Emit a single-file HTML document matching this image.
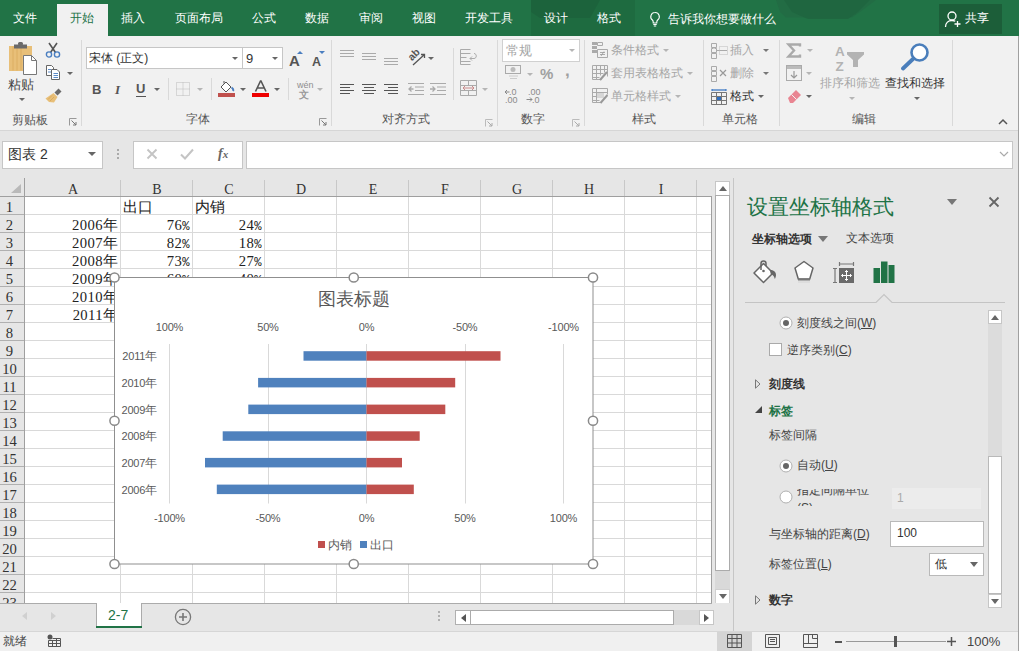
<!DOCTYPE html>
<html><head><meta charset="utf-8">
<style>
*{box-sizing:border-box;margin:0;padding:0}
html,body{width:1019px;height:651px;overflow:hidden;background:#e6e6e6;font-family:"Liberation Sans",sans-serif;color:#444;position:relative}
.a{position:absolute}
.t{position:absolute;white-space:nowrap;line-height:1}
#title{left:0;top:0;width:1019px;height:36px;background:#217346}
#title .tab{position:absolute;top:11px;font-size:12px;color:#fff;line-height:14px;white-space:nowrap}
#ribbon{left:0;top:36px;width:1019px;height:95px;background:#f1f1f1;border-bottom:1px solid #d6d6d6}
.sep{position:absolute;width:1px;background:#d9d9d9}
.glabel{position:absolute;top:77px;font-size:12px;color:#555;line-height:12px;white-space:nowrap}
.dis{color:#a6a6a6}
.arr{position:absolute;width:0;height:0;border-left:3px solid transparent;border-right:3px solid transparent;border-top:3px solid #666}
.arr.g{border-top-color:#b5b5b5}
.box{position:absolute;background:#fff;border:1px solid #c6c6c6}
#grid{left:0;top:178px;width:713px;height:425px;background:#fff;overflow:hidden}
.cell{position:absolute;font-family:"Liberation Serif",serif;font-size:14.67px;color:#222;line-height:13px;white-space:nowrap;letter-spacing:.4px}
#pane{left:733px;top:178px;width:286px;height:453px;background:#e6e6e6;border-left:1px solid #c6c6c6}
.pt{position:absolute;font-size:12px!important;color:#444;line-height:12px;white-space:nowrap}
.hd{position:absolute;top:6px;font-family:"Liberation Serif",serif;font-size:14px;color:#333;line-height:12px;text-align:center}
.rh{position:absolute;left:0;width:19px;text-align:center;font-family:"Liberation Serif",serif;font-size:14.67px;color:#333;line-height:12px}
.cell i{font-style:normal;font-size:14.67px;letter-spacing:0}
.cell b{font-weight:normal;font-family:"Liberation Mono",monospace;font-size:12.2px}
.cl{font-family:"Liberation Sans",sans-serif;font-size:11px;fill:#595959;letter-spacing:-.2px}
.cl tspan{font-size:12px}
.cl2{font-family:"Liberation Sans",sans-serif;font-size:12px;fill:#595959}
</style></head><body>

<!-- title / tabs -->
<div id="title" class="a">
  <div class="a" style="left:531px;top:0;width:104px;height:36px;background:#1e6b40"></div>
  <svg class="a" style="left:0;top:0" width="1019" height="36"><path d="M776 0H876L860 12 852 17.5H786L780 12z" fill="#226c44"/><path d="M784 0H870L858 12 848 19H808L792 12z" fill="#1f6540" opacity=".85"/><path d="M531 0H600L590 18H540L531 12z" fill="#1b5e3a" opacity=".6"/></svg>
  <div class="a" style="left:57px;top:4px;width:51px;height:32px;background:#f1f1f1"></div>
  <span class="tab" style="left:13px">文件</span>
  <span class="tab" style="left:70px;color:#217346">开始</span>
  <span class="tab" style="left:121px">插入</span>
  <span class="tab" style="left:175px">页面布局</span>
  <span class="tab" style="left:252px">公式</span>
  <span class="tab" style="left:305px">数据</span>
  <span class="tab" style="left:359px">审阅</span>
  <span class="tab" style="left:412px">视图</span>
  <span class="tab" style="left:465px">开发工具</span>
  <span class="tab" style="left:544px">设计</span>
  <span class="tab" style="left:597px">格式</span>
  <svg class="a" style="left:649px;top:11px" width="12" height="16" viewBox="0 0 12 16"><path d="M6 1.5a4.2 4.2 0 0 0-2.6 7.5c.6.5.8 1.2.8 2V12h3.6v-1c0-.8.3-1.5.9-2A4.2 4.2 0 0 0 6 1.5z" fill="none" stroke="#fff" stroke-width="1.1"/><path d="M4.3 13.5h3.4M4.8 15h2.4" stroke="#fff" stroke-width="1.1"/></svg>
  <span class="tab" style="left:668px;font-size:12px;top:12px">告诉我你想要做什么</span>
  <div class="a" style="left:939px;top:4px;width:63px;height:30px;background:#1c5e39"></div>
  <svg class="a" style="left:944px;top:10px" width="18" height="18" viewBox="0 0 18 18"><circle cx="8" cy="6" r="4" fill="none" stroke="#fff" stroke-width="1.3"/><path d="M1.5 17c0-4 2.8-6.5 6.5-6.5 1.3 0 2.4.3 3.3.8" fill="none" stroke="#fff" stroke-width="1.3"/><path d="M13.5 11v6M10.5 14h6" stroke="#fff" stroke-width="1.3"/></svg>
  <span class="tab" style="left:965px;top:11px">共享</span>
</div>

<!-- ribbon -->

<div id="ribbon" class="a"></div>
<!-- clipboard group -->
<svg class="a" style="left:8px;top:42px" width="32" height="34" viewBox="0 0 32 34">
 <rect x="1" y="4" width="23" height="25" fill="#e8bf78"/>
 <path d="M5 4.5v24M9 4.5v24M13 4.5v24" stroke="#dcae62" stroke-width="1"/>
 <rect x="6" y="2.5" width="13" height="4" fill="#6a6a6a"/>
 <rect x="10" y="0" width="5" height="3.5" rx="1.5" fill="#6a6a6a"/>
 <path d="M15.5 13.5h8l5 5v14h-13z" fill="#fff" stroke="#777" stroke-width="1"/>
 <path d="M23.5 13.5v5h5" fill="none" stroke="#777" stroke-width="1"/>
</svg>
<span class="t" style="left:8px;top:78px;font-size:13px;color:#444">粘贴</span>
<div class="arr" style="left:19px;top:98px"></div>
<svg class="a" style="left:45px;top:42px" width="16" height="16" viewBox="0 0 16 16">
 <path d="M4 1l6.5 9.5M12 1L5.5 10.5" stroke="#555" stroke-width="1.6"/>
 <circle cx="4" cy="12.5" r="2.6" fill="none" stroke="#4a7ec0" stroke-width="1.4"/>
 <circle cx="12" cy="12.5" r="2.6" fill="none" stroke="#4a7ec0" stroke-width="1.4"/>
</svg>
<svg class="a" style="left:45px;top:65px" width="16" height="15" viewBox="0 0 16 15">
 <path d="M1.5 .5h5l2 2v8h-7z" fill="#fff" stroke="#666"/>
 <path d="M6.5 4.5h5.5l2.5 2.5v7.5h-8z" fill="#fff" stroke="#666"/>
 <path d="M3 4.5h3M3 7h3M8.5 8.5h4.5M8.5 10.5h4.5M8.5 12.5h4.5" stroke="#4a7ec0" stroke-width=".9"/>
</svg>
<div class="arr" style="left:67px;top:72px"></div>
<svg class="a" style="left:45px;top:88px" width="17" height="15" viewBox="0 0 17 15">
 <path d="M9.5 4.5l4-4 3 3-4 4z" fill="#6a6a6a"/>
 <path d="M8.5 5l4 4-3.5 5.5L4 14 .5 10.5z" fill="#e8bf78"/>
 <path d="M3 11.5l4-4M5 13l4-4" stroke="#d4a55a" stroke-width=".8"/>
</svg>
<span class="glabel" style="left:12px;top:114px">剪贴板</span>
<svg class="a" style="left:69px;top:118px" width="8" height="8" viewBox="0 0 8 8"><path d="M.5 7.5v-7h7" fill="none" stroke="#999"/><path d="M2.5 2.5l4.5 4.5M4 7h3v-3" fill="none" stroke="#777"/></svg>
<div class="sep" style="left:81px;top:40px;height:86px"></div>

<!-- font group -->
<div class="box" style="left:86px;top:47px;width:157px;height:22px"></div>
<span class="t" style="left:89px;top:52px;font-size:12px;color:#333">宋体 (正文)</span>
<div class="arr" style="left:232px;top:57px"></div>
<div class="box" style="left:242px;top:47px;width:41px;height:22px"></div>
<span class="t" style="left:246px;top:52px;font-size:13px;color:#333">9</span>
<div class="arr" style="left:272px;top:57px"></div>
<span class="t" style="left:289px;top:53px;font-size:15px;color:#555;font-weight:bold">A</span>
<svg class="a" style="left:297px;top:51px" width="6" height="3"><path d="M0 3L3 0 6 3z" fill="#4a7ec0"/></svg>
<span class="t" style="left:312px;top:56px;font-size:12.5px;color:#555;font-weight:bold">A</span>
<svg class="a" style="left:319px;top:51px" width="6" height="3"><path d="M0 0L3 3 6 0z" fill="#4a7ec0"/></svg>
<span class="t" style="left:92px;top:83px;font-size:13px;font-weight:bold;color:#555">B</span>
<span class="t" style="left:115px;top:83px;font-size:13px;font-style:italic;font-family:'Liberation Serif',serif;font-weight:bold;color:#555">I</span>
<span class="t" style="left:136px;top:82px;font-size:13px;color:#555;font-weight:bold">U</span>
<div class="a" style="left:136px;top:96px;width:10px;height:1px;background:#555"></div>
<div class="arr" style="left:154px;top:88px"></div>
<div class="sep" style="left:168px;top:78px;height:22px"></div>
<svg class="a" style="left:176px;top:82px" width="15" height="15" viewBox="0 0 15 15"><path d="M.5 .5h13v13h-13zM7 .5v13M.5 7h13" fill="none" stroke="#bbb" stroke-dasharray="1 1"/></svg>
<div class="arr g" style="left:197px;top:88px"></div>
<div class="sep" style="left:211px;top:78px;height:22px"></div>
<svg class="a" style="left:218px;top:80px" width="17" height="17" viewBox="0 0 17 17">
 <path d="M3 7l5-5 5 5-5 5z" fill="#fff" stroke="#555"/>
 <path d="M6 3.5V1" stroke="#555"/>
 <path d="M13.5 7.5c1.5 1 2 2.5 1.5 3.5" fill="none" stroke="#4a7ec0" stroke-width="2"/>
 <rect x="0" y="13" width="17" height="4" fill="#c0504d"/>
</svg>
<div class="arr" style="left:240px;top:88px"></div>
<svg class="a" style="left:252px;top:80px" width="17" height="17" viewBox="0 0 17 17">
 <path d="M3.5 11.5L8.5 1h.5l5 10.5M5.5 8h7" fill="none" stroke="#555" stroke-width="1.6"/>
 <rect x="0" y="13" width="17" height="4" fill="#e00"/>
</svg>
<div class="arr" style="left:274px;top:88px"></div>
<div class="sep" style="left:288px;top:78px;height:22px"></div>
<span class="t" style="left:297px;top:81px;font-size:9px;color:#8e8e8e">wén</span>
<span class="t" style="left:299px;top:90px;font-size:10px;color:#999;font-weight:bold">文</span>
<div class="arr g" style="left:317px;top:88px"></div>
<span class="glabel" style="left:186px;top:113px">字体</span>
<svg class="a" style="left:319px;top:118px" width="8" height="8" viewBox="0 0 8 8"><path d="M.5 7.5v-7h7" fill="none" stroke="#999"/><path d="M2.5 2.5l4.5 4.5M4 7h3v-3" fill="none" stroke="#777"/></svg>
<div class="sep" style="left:331px;top:40px;height:86px"></div>

<!-- alignment group -->
<svg class="a" style="left:338px;top:48px" width="64" height="20" viewBox="0 0 64 20">
 <path d="M2 2.5h14M2 5.5h14M2 8.5h14" stroke="#aaa"/>
 <path d="M24 5.5h14M24 8.5h14M24 11.5h14" stroke="#aaa"/>
 <path d="M46 10.5h14M46 13.5h14M46 16.5h14" stroke="#aaa"/>
</svg>
<svg class="a" style="left:407px;top:48px" width="19" height="18" viewBox="0 0 19 18">
 <text x="1" y="10" transform="rotate(-45 7 7)" font-size="10.5" font-weight="bold" font-family="Liberation Sans" fill="#555">ab</text>
 <path d="M6 17L17.5 6.5M14 6.5h3.5v3.5" fill="none" stroke="#555" stroke-width="1.3"/>
</svg>
<div class="arr" style="left:428px;top:57px"></div>
<svg class="a" style="left:338px;top:82px" width="110" height="14" viewBox="0 0 110 14">
 <path d="M2 2.5h14M2 5.5h10M2 8.5h14M2 11.5h10" stroke="#555" stroke-width="1.2"/>
 <path d="M24 2.5h14M26 5.5h10M24 8.5h14M26 11.5h10" stroke="#555" stroke-width="1.2"/>
 <path d="M46 2.5h14M50 5.5h10M46 8.5h14M50 11.5h10" stroke="#555" stroke-width="1.2"/>
 <path d="M70 1.5h16M77 5h9M77 8.5h9M70 12.5h16" stroke="#aaa" stroke-width="1.1"/>
 <path d="M75.5 7H71M73.5 4.5L71 7l2.5 2.5" fill="none" stroke="#aaa" stroke-width="1.3"/>
 <path d="M92 1.5h16M99 5h9M99 8.5h9M92 12.5h16" stroke="#aaa" stroke-width="1.1"/>
 <path d="M92 7h5M94.5 4.5L97 7l-2.5 2.5" fill="none" stroke="#aaa" stroke-width="1.3"/>
</svg>
<div class="sep" style="left:453px;top:48px;height:52px"></div>
<svg class="a" style="left:460px;top:49px" width="18" height="16" viewBox="0 0 18 16">
 <path d="M.5 .5h10M.5 4.5h10M.5 8.5h6M.5 12.5h10M.5 .5v15h10" fill="none" stroke="#aaa"/>
 <path d="M14 4.5c3 0 3 5 0 5h-4M12 7.5l-2 2 2 2" fill="none" stroke="#aaa"/>
</svg>
<svg class="a" style="left:460px;top:80px" width="17" height="16" viewBox="0 0 17 16">
 <path d="M.5 .5h16v15H.5zM.5 5.5h16M.5 10.5h16M8.5 .5v5M8.5 10.5v5" fill="none" stroke="#aaa"/>
 <path d="M3 8h11M3 8l2-2M3 8l2 2M14 8l-2-2M14 8l-2 2" fill="none" stroke="#c98a8a"/>
</svg>
<div class="arr g" style="left:482px;top:88px"></div>
<span class="glabel" style="left:382px;top:113px">对齐方式</span>
<svg class="a" style="left:485px;top:119px" width="8" height="8" viewBox="0 0 8 8"><path d="M.5 7.5v-7h7" fill="none" stroke="#bbb"/><path d="M2.5 2.5l4.5 4.5M4 7h3v-3" fill="none" stroke="#aaa"/></svg>
<div class="sep" style="left:497px;top:40px;height:86px"></div>

<!-- number group -->
<div class="box" style="left:502px;top:39px;width:78px;height:23px;border-color:#d0d0d0"></div>
<span class="t dis" style="left:506px;top:44px;font-size:13px">常规</span>
<div class="arr g" style="left:569px;top:49px"></div>
<svg class="a" style="left:505px;top:65px" width="17" height="16" viewBox="0 0 17 16">
 <rect x=".5" y=".5" width="15" height="8" fill="none" stroke="#aaa"/>
 <circle cx="8" cy="4.5" r="2.5" fill="#bbb"/>
 <path d="M4 11h9M5 13.5h7" stroke="#ccc"/>
</svg>
<div class="arr g" style="left:527px;top:73px"></div>
<span class="t" style="left:540px;top:66px;font-size:15px;font-weight:bold;color:#a0a0a0">%</span>
<span class="t" style="left:565px;top:62px;font-size:17px;font-weight:bold;color:#a0a0a0">,</span>
<svg class="a" style="left:504px;top:88px" width="40" height="15" viewBox="0 0 40 15">
 <text x="5" y="7" font-size="9" font-family="Liberation Sans" fill="#8a8a8a">.0</text>
 <text x="1" y="14.5" font-size="9" font-family="Liberation Sans" fill="#8a8a8a">.00</text>
 <path d="M1 4h4.5M1 4l2-2M1 4l2 2" fill="none" stroke="#8a8a8a" stroke-width="1"/>
 <text x="24" y="7" font-size="9" font-family="Liberation Sans" fill="#8a8a8a">.00</text>
 <text x="28" y="14.5" font-size="9" font-family="Liberation Sans" fill="#8a8a8a">.0</text>
 <path d="M22.5 11.5h5.5M28 11.5l-2-2M28 11.5l-2 2" fill="none" stroke="#8a8a8a" stroke-width="1"/>
</svg>
<span class="glabel" style="left:521px;top:113px">数字</span>
<svg class="a" style="left:572px;top:119px" width="8" height="8" viewBox="0 0 8 8"><path d="M.5 7.5v-7h7" fill="none" stroke="#bbb"/><path d="M2.5 2.5l4.5 4.5M4 7h3v-3" fill="none" stroke="#aaa"/></svg>
<div class="sep" style="left:584px;top:40px;height:86px"></div>

<!-- styles group -->
<svg class="a" style="left:592px;top:42px" width="16" height="16" viewBox="0 0 16 16">
 <rect x="0" y="0" width="5" height="3" fill="#aaa"/><rect x="0" y="4" width="5" height="3" fill="#aaa"/><rect x="0" y="8" width="5" height="3" fill="#aaa"/>
 <path d="M5.5 .5h5v3h-5zM5.5 7.5h10v8h-10z" fill="none" stroke="#aaa"/>
 <path d="M8 10.5h5M8 12.5h5M12 9.5l-3 4.5" stroke="#999" stroke-width=".8"/>
</svg>
<span class="t dis" style="left:611px;top:44px;font-size:12px">条件格式</span>
<div class="arr g" style="left:663px;top:49px"></div>
<svg class="a" style="left:592px;top:65px" width="16" height="16" viewBox="0 0 16 16">
 <path d="M.5 .5h15v11M.5 .5v14h9M.5 4.5h15M.5 8.5h11M.5 12.5h7M4.5 .5v14M8.5 .5v10M12.5 .5v7" fill="none" stroke="#aaa"/>
 <path d="M15 7l-7 8" stroke="#999" stroke-width="2"/>
</svg>
<span class="t dis" style="left:611px;top:67px;font-size:12px">套用表格格式</span>
<div class="arr g" style="left:687px;top:72px"></div>
<svg class="a" style="left:592px;top:88px" width="16" height="16" viewBox="0 0 16 16">
 <path d="M.5 .5h15v6M.5 .5v14h8M.5 4.5h15M.5 8.5h10M.5 12.5h7M4.5 .5v14" fill="none" stroke="#aaa"/>
 <rect x="5" y="5" width="7" height="5" fill="#d6d6d6"/>
 <path d="M15.5 7l-7 8" stroke="#999" stroke-width="2"/>
</svg>
<span class="t dis" style="left:611px;top:90px;font-size:12px">单元格样式</span>
<div class="arr g" style="left:675px;top:95px"></div>
<span class="glabel" style="left:632px;top:113px">样式</span>
<div class="sep" style="left:703px;top:40px;height:86px"></div>

<!-- cells group -->
<svg class="a" style="left:711px;top:43px" width="17" height="16" viewBox="0 0 17 16">
 <path d="M.5 .5h5v4h-5zM.5 10.5h5v5h-5zM.5 5.5h2M3.5 5.5h2v4h-5v-4M6 7.5h10" fill="none" stroke="#aaa"/>
 <path d="M8.5 3.5h8v8h-8z" fill="none" stroke="#bbb" stroke-dasharray="1 1"/>
</svg>
<span class="t dis" style="left:730px;top:44px;font-size:12px">插入</span>
<div class="arr" style="left:763px;top:49px;border-top-color:#777"></div>
<svg class="a" style="left:711px;top:66px" width="17" height="16" viewBox="0 0 17 16">
 <path d="M.5 .5h5v4h-5zM.5 10.5h5v5h-5zM.5 5.5h5v4h-5z" fill="none" stroke="#aaa"/>
 <path d="M9 4l6 6M15 4l-6 6" stroke="#999" stroke-width="1.2"/>
</svg>
<span class="t dis" style="left:730px;top:67px;font-size:12px">删除</span>
<div class="arr" style="left:763px;top:72px;border-top-color:#777"></div>
<svg class="a" style="left:711px;top:89px" width="17" height="16" viewBox="0 0 17 16">
 <path d="M.5 3.5h15v12H.5zM.5 7.5h15M.5 11.5h15M5.5 3.5v12M10.5 3.5v12" fill="none" stroke="#777"/>
 <rect x="6" y="8" width="4" height="3" fill="#2f6fc0"/>
 <path d="M1 1h14" stroke="#2f6fc0" stroke-width="1.2"/>
 <path d="M1 0v2M15 0v2" stroke="#2f6fc0"/>
</svg>
<span class="t" style="left:730px;top:90px;font-size:12px;color:#333">格式</span>
<div class="arr" style="left:758px;top:95px"></div>
<span class="glabel" style="left:722px;top:113px">单元格</span>
<div class="sep" style="left:779px;top:40px;height:86px"></div>

<!-- editing group -->
<svg class="a" style="left:786px;top:43px" width="16" height="15" viewBox="0 0 16 15"><path d="M14 3.5V1.5H2.5l5.5 6-5.5 6H14v-2" fill="none" stroke="#aaa" stroke-width="2.4"/></svg>
<div class="arr g" style="left:807px;top:49px"></div>
<svg class="a" style="left:786px;top:65px" width="16" height="16" viewBox="0 0 16 16">
 <rect x=".5" y=".5" width="15" height="15" fill="none" stroke="#aaa"/>
 <rect x="1" y="1" width="14" height="3" fill="#bbb"/>
 <path d="M8 6v7M5 10l3 3 3-3" fill="none" stroke="#999" stroke-width="1.2"/>
</svg>
<div class="arr g" style="left:806px;top:72px"></div>
<svg class="a" style="left:786px;top:89px" width="17" height="14" viewBox="0 0 17 14"><path d="M2 9l8-8 5 5-8 8H4z" fill="#e98592"/><path d="M5.5 5.5l5 5" stroke="#f3f3f3" stroke-width="1"/></svg>
<div class="arr" style="left:806px;top:95px"></div>
<svg class="a" style="left:834px;top:44px" width="32" height="28" viewBox="0 0 32 28">
 <text x="1" y="12" font-size="13.5" font-weight="bold" font-family="Liberation Sans" fill="#b3b3b3">A</text>
 <text x="1.5" y="26.5" font-size="13.5" font-weight="bold" font-family="Liberation Sans" fill="#b3b3b3">Z</text>
 <path d="M13 8h17v2.5l-6 5.5v7h-5v-7l-6-5.5z" fill="#b3b3b3"/>
</svg>
<span class="t dis" style="left:820px;top:77px;font-size:12px">排序和筛选</span>
<div class="arr g" style="left:849px;top:97px"></div>
<svg class="a" style="left:900px;top:43px" width="30" height="28" viewBox="0 0 30 28">
 <circle cx="19.5" cy="9.5" r="8" fill="#fff" stroke="#4a7ebb" stroke-width="2.6"/>
 <path d="M13.5 15.5L3 25.5" stroke="#4a7ebb" stroke-width="3.8" stroke-linecap="round"/>
</svg>
<span class="t" style="left:885px;top:77px;font-size:12px;color:#333">查找和选择</span>
<div class="arr" style="left:914px;top:97px"></div>
<span class="glabel" style="left:852px;top:113px">编辑</span>
<div class="sep" style="left:952px;top:40px;height:86px"></div>
<svg class="a" style="left:998px;top:118px" width="10" height="7" viewBox="0 0 10 7"><path d="M1 6l4-4 4 4" fill="none" stroke="#555" stroke-width="1.5"/></svg>


<!-- formula bar -->
<div class="box" style="left:2px;top:141px;width:101px;height:28px"></div>
<span class="t" style="left:8px;top:147px;font-size:14px;color:#333">图表 2</span>
<div class="arr" style="left:88px;top:152px;border-width:4px 4px 0 4px;border-top-color:#666"></div>
<div class="a" style="left:117px;top:149px;width:2px;height:2px;background:#aaa;box-shadow:0 4px #aaa,0 8px #aaa"></div>
<div class="box" style="left:133px;top:141px;width:110px;height:28px"></div>
<div class="box" style="left:246px;top:141px;width:767px;height:28px"></div>
<svg class="a" style="left:146px;top:148px" width="12" height="12" viewBox="0 0 12 12"><path d="M1.5 1.5l9 9M10.5 1.5l-9 9" stroke="#c4c4c4" stroke-width="1.9"/></svg>
<svg class="a" style="left:180px;top:148px" width="14" height="12" viewBox="0 0 14 12"><path d="M1 6.5l4 4L13 1.5" fill="none" stroke="#c4c4c4" stroke-width="2"/></svg>
<span class="t" style="left:218px;top:147px;font-size:14px;font-family:'Liberation Serif',serif;font-style:italic;font-weight:bold;color:#666">f<span style="font-size:11px">x</span></span>
<svg class="a" style="left:999px;top:151px" width="10" height="6" viewBox="0 0 10 6"><path d="M1 1l4 4 4-4" fill="none" stroke="#aaa" stroke-width="1.2"/></svg>


<!-- grid -->
<div id="grid" class="a"><div class="a" style="left:0;top:0;width:713px;height:18px;background:#e6e6e6"></div>
<div class="a" style="left:0;top:0;width:24px;height:425px;background:#e6e6e6"></div>
<svg class="a" style="left:11px;top:6px" width="10" height="9"><path d="M10 0V9H0z" fill="#b9b9b9"/></svg>
<div class="a" style="left:120px;top:18px;width:1px;height:407px;background:#d9d9d9"></div>
<div class="a" style="left:120px;top:2px;width:1px;height:16px;background:#c8c8c8"></div>
<div class="a" style="left:192px;top:18px;width:1px;height:407px;background:#d9d9d9"></div>
<div class="a" style="left:192px;top:2px;width:1px;height:16px;background:#c8c8c8"></div>
<div class="a" style="left:264px;top:18px;width:1px;height:407px;background:#d9d9d9"></div>
<div class="a" style="left:264px;top:2px;width:1px;height:16px;background:#c8c8c8"></div>
<div class="a" style="left:336px;top:18px;width:1px;height:407px;background:#d9d9d9"></div>
<div class="a" style="left:336px;top:2px;width:1px;height:16px;background:#c8c8c8"></div>
<div class="a" style="left:408px;top:18px;width:1px;height:407px;background:#d9d9d9"></div>
<div class="a" style="left:408px;top:2px;width:1px;height:16px;background:#c8c8c8"></div>
<div class="a" style="left:480px;top:18px;width:1px;height:407px;background:#d9d9d9"></div>
<div class="a" style="left:480px;top:2px;width:1px;height:16px;background:#c8c8c8"></div>
<div class="a" style="left:552px;top:18px;width:1px;height:407px;background:#d9d9d9"></div>
<div class="a" style="left:552px;top:2px;width:1px;height:16px;background:#c8c8c8"></div>
<div class="a" style="left:624px;top:18px;width:1px;height:407px;background:#d9d9d9"></div>
<div class="a" style="left:624px;top:2px;width:1px;height:16px;background:#c8c8c8"></div>
<div class="a" style="left:696px;top:18px;width:1px;height:407px;background:#d9d9d9"></div>
<div class="a" style="left:696px;top:2px;width:1px;height:16px;background:#c8c8c8"></div>
<span class="hd" style="left:68px;width:10px">A</span>
<span class="hd" style="left:152px;width:10px">B</span>
<span class="hd" style="left:224px;width:10px">C</span>
<span class="hd" style="left:296px;width:10px">D</span>
<span class="hd" style="left:368px;width:10px">E</span>
<span class="hd" style="left:440px;width:10px">F</span>
<span class="hd" style="left:512px;width:10px">G</span>
<span class="hd" style="left:584px;width:10px">H</span>
<span class="hd" style="left:656px;width:10px">I</span>
<div class="a" style="left:24px;top:36px;width:689px;height:1px;background:#d9d9d9"></div>
<div class="a" style="left:0;top:36px;width:24px;height:1px;background:#b0b0b0"></div>
<span class="rh" style="top:23px">1</span>
<div class="a" style="left:24px;top:54px;width:689px;height:1px;background:#d9d9d9"></div>
<div class="a" style="left:0;top:54px;width:24px;height:1px;background:#b0b0b0"></div>
<span class="rh" style="top:41px">2</span>
<div class="a" style="left:24px;top:72px;width:689px;height:1px;background:#d9d9d9"></div>
<div class="a" style="left:0;top:72px;width:24px;height:1px;background:#b0b0b0"></div>
<span class="rh" style="top:59px">3</span>
<div class="a" style="left:24px;top:90px;width:689px;height:1px;background:#d9d9d9"></div>
<div class="a" style="left:0;top:90px;width:24px;height:1px;background:#b0b0b0"></div>
<span class="rh" style="top:77px">4</span>
<div class="a" style="left:24px;top:108px;width:689px;height:1px;background:#d9d9d9"></div>
<div class="a" style="left:0;top:108px;width:24px;height:1px;background:#b0b0b0"></div>
<span class="rh" style="top:95px">5</span>
<div class="a" style="left:24px;top:126px;width:689px;height:1px;background:#d9d9d9"></div>
<div class="a" style="left:0;top:126px;width:24px;height:1px;background:#b0b0b0"></div>
<span class="rh" style="top:113px">6</span>
<div class="a" style="left:24px;top:144px;width:689px;height:1px;background:#d9d9d9"></div>
<div class="a" style="left:0;top:144px;width:24px;height:1px;background:#b0b0b0"></div>
<span class="rh" style="top:131px">7</span>
<div class="a" style="left:24px;top:162px;width:689px;height:1px;background:#d9d9d9"></div>
<div class="a" style="left:0;top:162px;width:24px;height:1px;background:#b0b0b0"></div>
<span class="rh" style="top:149px">8</span>
<div class="a" style="left:24px;top:180px;width:689px;height:1px;background:#d9d9d9"></div>
<div class="a" style="left:0;top:180px;width:24px;height:1px;background:#b0b0b0"></div>
<span class="rh" style="top:167px">9</span>
<div class="a" style="left:24px;top:198px;width:689px;height:1px;background:#d9d9d9"></div>
<div class="a" style="left:0;top:198px;width:24px;height:1px;background:#b0b0b0"></div>
<span class="rh" style="top:185px">10</span>
<div class="a" style="left:24px;top:216px;width:689px;height:1px;background:#d9d9d9"></div>
<div class="a" style="left:0;top:216px;width:24px;height:1px;background:#b0b0b0"></div>
<span class="rh" style="top:203px">11</span>
<div class="a" style="left:24px;top:234px;width:689px;height:1px;background:#d9d9d9"></div>
<div class="a" style="left:0;top:234px;width:24px;height:1px;background:#b0b0b0"></div>
<span class="rh" style="top:221px">12</span>
<div class="a" style="left:24px;top:252px;width:689px;height:1px;background:#d9d9d9"></div>
<div class="a" style="left:0;top:252px;width:24px;height:1px;background:#b0b0b0"></div>
<span class="rh" style="top:239px">13</span>
<div class="a" style="left:24px;top:270px;width:689px;height:1px;background:#d9d9d9"></div>
<div class="a" style="left:0;top:270px;width:24px;height:1px;background:#b0b0b0"></div>
<span class="rh" style="top:257px">14</span>
<div class="a" style="left:24px;top:288px;width:689px;height:1px;background:#d9d9d9"></div>
<div class="a" style="left:0;top:288px;width:24px;height:1px;background:#b0b0b0"></div>
<span class="rh" style="top:275px">15</span>
<div class="a" style="left:24px;top:306px;width:689px;height:1px;background:#d9d9d9"></div>
<div class="a" style="left:0;top:306px;width:24px;height:1px;background:#b0b0b0"></div>
<span class="rh" style="top:293px">16</span>
<div class="a" style="left:24px;top:324px;width:689px;height:1px;background:#d9d9d9"></div>
<div class="a" style="left:0;top:324px;width:24px;height:1px;background:#b0b0b0"></div>
<span class="rh" style="top:311px">17</span>
<div class="a" style="left:24px;top:342px;width:689px;height:1px;background:#d9d9d9"></div>
<div class="a" style="left:0;top:342px;width:24px;height:1px;background:#b0b0b0"></div>
<span class="rh" style="top:329px">18</span>
<div class="a" style="left:24px;top:360px;width:689px;height:1px;background:#d9d9d9"></div>
<div class="a" style="left:0;top:360px;width:24px;height:1px;background:#b0b0b0"></div>
<span class="rh" style="top:347px">19</span>
<div class="a" style="left:24px;top:378px;width:689px;height:1px;background:#d9d9d9"></div>
<div class="a" style="left:0;top:378px;width:24px;height:1px;background:#b0b0b0"></div>
<span class="rh" style="top:365px">20</span>
<div class="a" style="left:24px;top:396px;width:689px;height:1px;background:#d9d9d9"></div>
<div class="a" style="left:0;top:396px;width:24px;height:1px;background:#b0b0b0"></div>
<span class="rh" style="top:383px">21</span>
<div class="a" style="left:24px;top:414px;width:689px;height:1px;background:#d9d9d9"></div>
<div class="a" style="left:0;top:414px;width:24px;height:1px;background:#b0b0b0"></div>
<span class="rh" style="top:401px">22</span>
<div class="a" style="left:24px;top:432px;width:689px;height:1px;background:#d9d9d9"></div>
<div class="a" style="left:0;top:432px;width:24px;height:1px;background:#b0b0b0"></div>
<span class="rh" style="top:419px">23</span>
<div class="a" style="left:24px;top:450px;width:689px;height:1px;background:#d9d9d9"></div>
<div class="a" style="left:0;top:450px;width:24px;height:1px;background:#b0b0b0"></div>
<span class="rh" style="top:437px">24</span>
<div class="a" style="left:0;top:18px;width:712px;height:1px;background:#9f9f9f"></div>
<div class="a" style="left:24px;top:0;width:1px;height:425px;background:#9f9f9f"></div>
<div class="a" style="left:711px;top:18px;width:1px;height:407px;background:#9f9f9f"></div><div class="a" style="left:712px;top:0;width:1px;height:425px;background:#e6e6e6"></div>
<span class="cell" style="left:123px;top:23px"><i>出口</i></span>
<span class="cell" style="left:195px;top:23px"><i>内销</i></span>
<span class="cell" style="right:595px;top:41px">2006<i>年</i></span>
<span class="cell" style="right:523px;top:41px">76<b>%</b></span>
<span class="cell" style="right:451px;top:41px">24<b>%</b></span>
<span class="cell" style="right:595px;top:59px">2007<i>年</i></span>
<span class="cell" style="right:523px;top:59px">82<b>%</b></span>
<span class="cell" style="right:451px;top:59px">18<b>%</b></span>
<span class="cell" style="right:595px;top:77px">2008<i>年</i></span>
<span class="cell" style="right:523px;top:77px">73<b>%</b></span>
<span class="cell" style="right:451px;top:77px">27<b>%</b></span>
<span class="cell" style="right:595px;top:95px">2009<i>年</i></span>
<span class="cell" style="right:523px;top:95px">60<b>%</b></span>
<span class="cell" style="right:451px;top:95px">40<b>%</b></span>
<span class="cell" style="right:595px;top:113px">2010<i>年</i></span>
<span class="cell" style="right:523px;top:113px">55<b>%</b></span>
<span class="cell" style="right:451px;top:113px">45<b>%</b></span>
<span class="cell" style="right:595px;top:131px">2011<i>年</i></span>
<span class="cell" style="right:523px;top:131px">32<b>%</b></span>
<span class="cell" style="right:451px;top:131px">68<b>%</b></span></div>

<!-- chart -->
<svg class="a" style="left:0;top:0" width="1019" height="651" viewBox="0 0 1019 651">
<rect x="114.5" y="277.5" width="478.5" height="286.5" fill="#fff" stroke="#8f8f8f" stroke-width="1"/>
<path d="M169.5 344V503.5" stroke="#d9d9d9" stroke-width="1"/>
<path d="M268.5 344V503.5" stroke="#d9d9d9" stroke-width="1"/>
<path d="M366.5 344V503.5" stroke="#d9d9d9" stroke-width="1"/>
<path d="M465.5 344V503.5" stroke="#d9d9d9" stroke-width="1"/>
<path d="M563.5 344V503.5" stroke="#d9d9d9" stroke-width="1"/>
<rect x="216.8" y="484.6" width="149.7" height="9.5" fill="#4f81bd"/>
<rect x="366.5" y="484.6" width="47.3" height="9.5" fill="#c0504d"/>
<text x="157" y="493.6" text-anchor="end" class="cl">2006<tspan>年</tspan></text>
<rect x="205.0" y="457.9" width="161.5" height="9.5" fill="#4f81bd"/>
<rect x="366.5" y="457.9" width="35.5" height="9.5" fill="#c0504d"/>
<text x="157" y="466.9" text-anchor="end" class="cl">2007<tspan>年</tspan></text>
<rect x="222.7" y="431.3" width="143.8" height="9.5" fill="#4f81bd"/>
<rect x="366.5" y="431.3" width="53.2" height="9.5" fill="#c0504d"/>
<text x="157" y="440.3" text-anchor="end" class="cl">2008<tspan>年</tspan></text>
<rect x="248.3" y="404.6" width="118.2" height="9.5" fill="#4f81bd"/>
<rect x="366.5" y="404.6" width="78.8" height="9.5" fill="#c0504d"/>
<text x="157" y="413.6" text-anchor="end" class="cl">2009<tspan>年</tspan></text>
<rect x="258.1" y="377.9" width="108.4" height="9.5" fill="#4f81bd"/>
<rect x="366.5" y="377.9" width="88.7" height="9.5" fill="#c0504d"/>
<text x="157" y="386.9" text-anchor="end" class="cl">2010<tspan>年</tspan></text>
<rect x="303.5" y="351.2" width="63.0" height="9.5" fill="#4f81bd"/>
<rect x="366.5" y="351.2" width="134.0" height="9.5" fill="#c0504d"/>
<text x="157" y="360.2" text-anchor="end" class="cl">2011<tspan>年</tspan></text>
<path d="M366.5 344V503.5" stroke="#d9d9d9" stroke-width="1" opacity=".0"/>
<text x="169.5" y="330.5" text-anchor="middle" class="cl">100%</text>
<text x="169.5" y="521.5" text-anchor="middle" class="cl">-100%</text>
<text x="268.0" y="330.5" text-anchor="middle" class="cl">50%</text>
<text x="268.0" y="521.5" text-anchor="middle" class="cl">-50%</text>
<text x="366.5" y="330.5" text-anchor="middle" class="cl">0%</text>
<text x="366.5" y="521.5" text-anchor="middle" class="cl">0%</text>
<text x="465.0" y="330.5" text-anchor="middle" class="cl">-50%</text>
<text x="465.0" y="521.5" text-anchor="middle" class="cl">50%</text>
<text x="563.5" y="330.5" text-anchor="middle" class="cl">-100%</text>
<text x="563.5" y="521.5" text-anchor="middle" class="cl">100%</text>
<text x="354" y="305" text-anchor="middle" font-size="18" fill="#595959" font-family="Liberation Sans">图表标题</text>
<rect x="318" y="541" width="7" height="7" fill="#c0504d"/>
<text x="328" y="548.5" class="cl2">内销</text>
<rect x="360" y="541" width="7" height="7" fill="#4f81bd"/>
<text x="370" y="548.5" class="cl2">出口</text>
<circle cx="114.5" cy="277.5" r="4.6" fill="#fff" stroke="#8a8a8a" stroke-width="1.5"/>
<circle cx="353.75" cy="277.5" r="4.6" fill="#fff" stroke="#8a8a8a" stroke-width="1.5"/>
<circle cx="593" cy="277.5" r="4.6" fill="#fff" stroke="#8a8a8a" stroke-width="1.5"/>
<circle cx="114.5" cy="420.75" r="4.6" fill="#fff" stroke="#8a8a8a" stroke-width="1.5"/>
<circle cx="593" cy="420.75" r="4.6" fill="#fff" stroke="#8a8a8a" stroke-width="1.5"/>
<circle cx="114.5" cy="564" r="4.6" fill="#fff" stroke="#8a8a8a" stroke-width="1.5"/>
<circle cx="353.75" cy="564" r="4.6" fill="#fff" stroke="#8a8a8a" stroke-width="1.5"/>
<circle cx="593" cy="564" r="4.6" fill="#fff" stroke="#8a8a8a" stroke-width="1.5"/>
</svg>
<!-- pane -->
<div id="pane" class="a"></div>
<span class="t" style="left:747px;top:196px;font-size:21px;color:#217346">设置坐标轴格式</span>
<svg class="a" style="left:947px;top:199px" width="10" height="6"><path d="M0 0h10L5 6z" fill="#777"/></svg>
<svg class="a" style="left:988px;top:196px" width="12" height="12" viewBox="0 0 12 12"><path d="M1.5 1.5l9 9M10.5 1.5l-9 9" stroke="#666" stroke-width="1.8"/></svg>
<span class="t" style="left:752px;top:233px;font-size:12px;color:#333;font-weight:bold">坐标轴选项</span>
<svg class="a" style="left:818px;top:236px" width="10" height="6"><path d="M0 0h10L5 6z" fill="#777"/></svg>
<span class="pt" style="left:846px;top:232px;font-size:12.5px">文本选项</span>
<svg class="a" style="left:750px;top:258px" width="30" height="28" viewBox="0 0 30 28">
 <path d="M13.5 5.5l9.5 9.5-9.5 9.5L4 15z" fill="#fff" stroke="#666" stroke-width="1.5" stroke-linejoin="round"/>
 <path d="M11 12V5.5a2.5 2.5 0 0 1 5 0V8" fill="none" stroke="#666" stroke-width="1.5"/>
 <circle cx="13.5" cy="13" r="1.3" fill="#666"/>
 <path d="M20 12c3.5 0 6 1.5 6 5 0 1.5-.6 3-1.2 4-.4-2-1.5-4-4.3-5.5z" fill="#666"/>
</svg>
<svg class="a" style="left:792px;top:258px" width="24" height="30" viewBox="0 0 24 30">
 <path d="M12 3.5l9 6.5-3.3 11H6.3L3 10z" fill="#fff" stroke="#666" stroke-width="1.5" stroke-linejoin="round"/>
 <path d="M6 21.5h12" stroke="#777" stroke-width="2"/>
 <path d="M6 24h12" stroke="#ddd" stroke-width="2"/>
</svg>
<svg class="a" style="left:832px;top:260px" width="24" height="25" viewBox="0 0 24 25">
 <path d="M7.5 2v4M21.5 2v4M7.5 4h14" stroke="#777" stroke-width="1.2"/>
 <path d="M1 8.5h4M1 22.5h4M3 8.5v14" stroke="#777" stroke-width="1.2"/>
 <rect x="7" y="8" width="15" height="15" fill="#6a6a6a"/>
 <path d="M14.5 10.5v10M9.5 15.5h10M13 12l1.5-1.5 1.5 1.5M13 19l1.5 1.5 1.5-1.5M11 14l-1.5 1.5 1.5 1.5M18 14l1.5 1.5-1.5 1.5" fill="none" stroke="#fff" stroke-width="1"/>
</svg>
<svg class="a" style="left:873px;top:261px" width="22" height="23" viewBox="0 0 22 23">
 <rect x=".5" y="7" width="6.5" height="15" fill="#217346"/>
 <rect x="8" y=".5" width="6.5" height="21.5" fill="#217346"/>
 <rect x="15.5" y="4" width="6" height="18" fill="#217346"/>
</svg>
<svg class="a" style="left:745px;top:293px" width="262" height="12" viewBox="0 0 262 12"><path d="M0 9.5H131l8-8 8 8H260" fill="none" stroke="#c4c4c4" stroke-width="1.2"/></svg>
<!-- pane items -->
<svg class="a" style="left:779px;top:316px" width="14" height="14" viewBox="0 0 14 14"><circle cx="7" cy="7" r="6" fill="#fff" stroke="#b0b0b0"/><circle cx="7" cy="7" r="3" fill="#666"/></svg>
<span class="pt" style="left:797px;top:317px;font-size:12.5px">刻度线之间(<u>W</u>)</span>
<div class="a" style="left:769px;top:343px;width:13px;height:13px;background:#fff;border:1px solid #aaa"></div>
<span class="pt" style="left:787px;top:344px;font-size:12.5px">逆序类别(<u>C</u>)</span>
<svg class="a" style="left:755px;top:379px" width="6" height="10"><path d="M.5 .8L5 5 .5 9.2z" fill="none" stroke="#777"/></svg>
<span class="pt" style="left:769px;top:378px;font-size:12.5px;font-weight:bold;color:#333">刻度线</span>
<svg class="a" style="left:755px;top:406px" width="7" height="7"><path d="M7 0v7H0z" fill="#444"/></svg>
<span class="pt" style="left:769px;top:405px;font-size:12.5px;font-weight:bold;color:#217346">标签</span>
<span class="pt" style="left:769px;top:429px;font-size:12.5px">标签间隔</span>
<svg class="a" style="left:779px;top:459px" width="14" height="14" viewBox="0 0 14 14"><circle cx="7" cy="7" r="6" fill="#fff" stroke="#b0b0b0"/><circle cx="7" cy="7" r="3" fill="#666"/></svg>
<span class="pt" style="left:797px;top:459px;font-size:12.5px">自动(<u>U</u>)</span>
<svg class="a" style="left:779px;top:490px" width="14" height="14" viewBox="0 0 14 14"><circle cx="7" cy="7" r="6" fill="#fff" stroke="#b0b0b0"/></svg>
<div class="a" style="left:797px;top:489px;width:80px;height:17px;overflow:hidden">
 <span class="pt" style="left:0;top:-8px;font-size:12.5px;line-height:18px;white-space:normal;width:80px">指定间隔单位<br>(<u>S</u>)</span>
</div>
<div class="a" style="left:891px;top:487px;width:91px;height:23px;background:#ececec;border:1px solid #e6e6e6"></div>
<span class="pt" style="left:897px;top:492px;font-size:12.5px;color:#aaa">1</span>
<span class="pt" style="left:769px;top:528px;font-size:12.5px">与坐标轴的距离(<u>D</u>)</span>
<div class="a" style="left:890px;top:521px;width:94px;height:26px;background:#fff;border:1px solid #b9b9b9"></div>
<span class="pt" style="left:897px;top:527px;font-size:12.5px;color:#333">100</span>
<span class="pt" style="left:769px;top:558px;font-size:12.5px">标签位置(<u>L</u>)</span>
<div class="a" style="left:929px;top:553px;width:55px;height:23px;background:#fff;border:1px solid #b9b9b9"></div>
<span class="pt" style="left:935px;top:558px;font-size:12.5px;color:#333">低</span>
<svg class="a" style="left:970px;top:562px" width="8" height="5"><path d="M0 0h8L4 5z" fill="#666"/></svg>
<svg class="a" style="left:755px;top:595px" width="6" height="10"><path d="M.5 .8L5 5 .5 9.2z" fill="none" stroke="#777"/></svg>
<span class="pt" style="left:769px;top:594px;font-size:12.5px;font-weight:bold;color:#333">数字</span>
<!-- pane scrollbar -->
<div class="a" style="left:988px;top:324px;width:14px;height:270px;background:#dcdcdc"></div>
<div class="a" style="left:988px;top:310px;width:14px;height:14px;background:#fff;border:1px solid #c6c6c6"></div>
<svg class="a" style="left:991px;top:315px" width="8" height="5"><path d="M0 5h8L4 0z" fill="#666"/></svg>
<div class="a" style="left:988px;top:456px;width:14px;height:138px;background:#fff;border:1px solid #b9b9b9"></div>
<div class="a" style="left:988px;top:594px;width:14px;height:14px;background:#fff;border:1px solid #c6c6c6"></div>
<svg class="a" style="left:991px;top:599px" width="8" height="5"><path d="M0 0h8L4 5z" fill="#666"/></svg>



<!-- sheet vscroll -->
<div class="a" style="left:713px;top:178px;width:20px;height:425px;background:#e6e6e6"></div>
<div class="a" style="left:715px;top:181px;width:15px;height:15px;background:#fff;border:1px solid #c6c6c6"></div>
<svg class="a" style="left:719px;top:186px" width="8" height="5"><path d="M0 5h8L4 0z" fill="#666"/></svg>
<div class="a" style="left:715px;top:195px;width:15px;height:376px;background:#fff;border:1px solid #ababab"></div>
<div class="a" style="left:715px;top:571px;width:15px;height:19px;background:#d9d9d9"></div>
<div class="a" style="left:715px;top:589px;width:15px;height:15px;background:#fff;border:1px solid #d0d0d0"></div>
<svg class="a" style="left:719px;top:594px" width="8" height="5"><path d="M0 0h8L4 5z" fill="#666"/></svg>
<!-- tab bar -->
<div class="a" style="left:0;top:603px;width:733px;height:28px;background:#e6e6e6"></div><div class="a" style="left:0;top:603px;width:712px;height:1px;background:#ababab"></div>
<svg class="a" style="left:22px;top:612px" width="5" height="8"><path d="M5 0v8L0 4z" fill="#d0d0d0"/></svg>
<svg class="a" style="left:51px;top:612px" width="5" height="8"><path d="M0 0v8l5-4z" fill="#d0d0d0"/></svg>
<div class="a" style="left:96px;top:603px;width:46px;height:24px;background:#fff;border-left:1px solid #ababab;border-right:1px solid #ababab"></div>
<div class="a" style="left:96px;top:626px;width:46px;height:2px;background:#217346"></div>
<span class="t" style="left:108px;top:608px;font-size:14px;color:#217346">2-7</span>
<svg class="a" style="left:174px;top:608px" width="18" height="18" viewBox="0 0 18 18"><circle cx="9" cy="9" r="7.6" fill="none" stroke="#777" stroke-width="1.3"/><path d="M9 5v8M5 9h8" stroke="#777" stroke-width="1.6"/></svg>
<div class="a" style="left:438px;top:611px;width:2px;height:2px;background:#b0b0b0;box-shadow:0 4px #b0b0b0,0 8px #b0b0b0"></div>
<div class="a" style="left:455px;top:610px;width:16px;height:15px;background:#fff;border:1px solid #b0b0b0"></div>
<svg class="a" style="left:461px;top:614px" width="5" height="8"><path d="M5 0v8L0 4z" fill="#555"/></svg>
<div class="a" style="left:470px;top:610px;width:204px;height:15px;background:#fff;border:1px solid #ababab"></div>
<div class="a" style="left:674px;top:610px;width:25px;height:15px;background:#d9d9d9"></div>
<div class="a" style="left:699px;top:610px;width:15px;height:15px;background:#fff;border:1px solid #c6c6c6"></div>
<svg class="a" style="left:704px;top:614px" width="5" height="8"><path d="M0 0v8l5-4z" fill="#555"/></svg>
<div class="a" style="left:733px;top:178px;width:1px;height:453px;background:#c6c6c6"></div>
<!-- status bar -->
<div class="a" style="left:0;top:631px;width:1019px;height:20px;background:#f0f0f0;border-top:1px solid #d6d6d6"></div>
<span class="t" style="left:3px;top:635px;font-size:12px;color:#444">就绪</span>
<svg class="a" style="left:47px;top:634px" width="14" height="13" viewBox="0 0 14 13">
 <circle cx="3" cy="3" r="2.5" fill="#555"/>
 <path d="M1.5 6.5h12v6h-12zM5.5 4.5h8v2M1.5 9.5h12M5.5 6.5v6M9.5 4.5v8" fill="none" stroke="#555"/>
</svg>
<div class="a" style="left:717px;top:632px;width:35px;height:19px;background:#d4d4d4"></div>
<svg class="a" style="left:727px;top:634px" width="15" height="14" viewBox="0 0 15 14"><path d="M.5 .5h14v13H.5zM.5 4.5h14M.5 9h14M5 .5v13M10 .5v13" fill="none" stroke="#555"/></svg>
<svg class="a" style="left:765px;top:634px" width="15" height="14" viewBox="0 0 15 14"><path d="M.5 .5h14v13H.5z" fill="none" stroke="#555"/><path d="M3.5 3.5h8v7h-8zM5 5.5h5M5 7.5h5" fill="none" stroke="#555"/></svg>
<svg class="a" style="left:803px;top:634px" width="15" height="14" viewBox="0 0 15 14"><path d="M.5 .5h14v13H.5zM.5 9.5h14M5.5 .5v9M9.5 .5v4h5" fill="none" stroke="#555"/></svg>
<div class="a" style="left:835px;top:641px;width:7px;height:1.5px;background:#555"></div>
<div class="a" style="left:846px;top:641px;width:100px;height:1px;background:#999"></div>
<div class="a" style="left:894px;top:636px;width:3px;height:11px;background:#555"></div>
<svg class="a" style="left:947px;top:637px" width="9" height="9"><path d="M4.5 0v9M0 4.5h9" stroke="#555" stroke-width="1.5"/></svg>
<span class="t" style="left:967px;top:635px;font-size:13px;color:#444">100%</span>
<div class="a" style="left:1018px;top:36px;width:1px;height:615px;background:#a0a0a0"></div>
</body></html>
